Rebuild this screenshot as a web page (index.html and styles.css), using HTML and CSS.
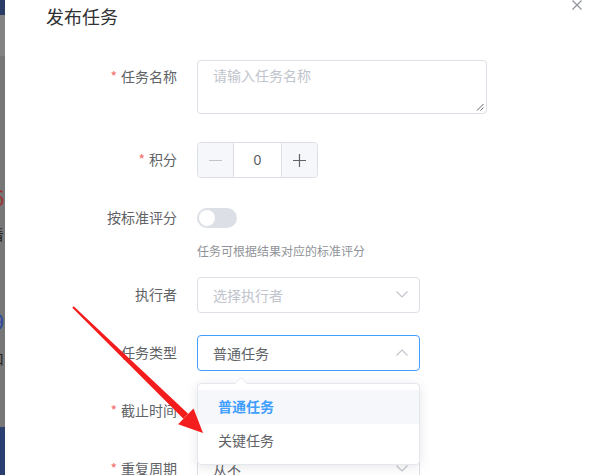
FILE: index.html
```html
<!DOCTYPE html>
<html lang="zh-CN">
<head>
    <meta charset="UTF-8">
    <title>发布任务</title>
    <link rel="stylesheet" href="styles.css">
</head>
<body>

    <div class="backdrop">
        <div class="bd-top"></div>
        <div class="bd-light"></div>
        <div class="bd-main">
            <span class="peek red">6</span>
            <span class="peek dark">看</span>
            <span class="peek blue">9</span>
            <span class="peek dark">口</span>
        </div>
        <div class="bd-bottom"></div>
    </div>

    <div class="dialog">
        <div class="dialog-header">
            <h3 class="dialog-title">发布任务</h3>
            <svg class="close" width="10" height="10" viewBox="0 0 10 10">
                <path d="M0.5 0.5 L9.5 9.5 M9.5 0.5 L0.5 9.5" stroke="#909399" stroke-width="1.2" fill="none"/>
            </svg>
        </div>

        <div class="form">
            <div class="form-item item-name">
                <label class="form-label"><span class="req">*</span>任务名称</label>
                <div class="form-content">
                    <div class="textarea">
                        <span class="placeholder">请输入任务名称</span>
                        <svg class="resize" width="8" height="8" viewBox="0 0 8 8">
                            <path d="M7.5 1 L1 7.5 M7.5 4.5 L4.5 7.5" stroke="#606266" stroke-width="1" fill="none"/>
                        </svg>
                    </div>
                </div>
            </div>

            <div class="form-item">
                <label class="form-label"><span class="req">*</span>积分</label>
                <div class="form-content">
                    <div class="input-number">
                        <span class="num-btn minus">
                            <svg width="13" height="13" viewBox="0 0 13 13"><path d="M0 6.5 H13" stroke="#c0c4cc" stroke-width="1.2"/></svg>
                        </span>
                        <span class="num-value">0</span>
                        <span class="num-btn plus">
                            <svg width="13" height="13" viewBox="0 0 13 13"><path d="M0 6.5 H13 M6.5 0 V13" stroke="#606266" stroke-width="1.2"/></svg>
                        </span>
                    </div>
                </div>
            </div>

            <div class="form-item item-switch">
                <label class="form-label">按标准评分</label>
                <div class="form-content">
                    <div class="switch-line">
                        <span class="switch"><span class="knob"></span></span>
                    </div>
                    <div class="hint">任务可根据结果对应的标准评分</div>
                </div>
            </div>

            <div class="form-item">
                <label class="form-label">执行者</label>
                <div class="form-content">
                    <div class="select">
                        <span class="placeholder">选择执行者</span>
                        <svg class="arrow" width="12" height="7" viewBox="0 0 12 7"><path d="M0.5 0.5 L6 6 L11.5 0.5" stroke="#c0c4cc" stroke-width="1.1" fill="none"/></svg>
                    </div>
                </div>
            </div>

            <div class="form-item">
                <label class="form-label">任务类型</label>
                <div class="form-content">
                    <div class="select focused">
                        <span class="value">普通任务</span>
                        <svg class="arrow" width="12" height="7" viewBox="0 0 12 7"><path d="M0.5 6.5 L6 1 L11.5 6.5" stroke="#c0c4cc" stroke-width="1.1" fill="none"/></svg>
                    </div>
                </div>
            </div>

            <div class="form-item">
                <label class="form-label"><span class="req">*</span>截止时间</label>
                <div class="form-content">
                    <div class="select"></div>
                </div>
            </div>

            <div class="form-item">
                <label class="form-label"><span class="req">*</span>重复周期</label>
                <div class="form-content">
                    <div class="select">
                        <span class="value">从不</span>
                        <svg class="arrow" width="12" height="7" viewBox="0 0 12 7"><path d="M0.5 0.5 L6 6 L11.5 0.5" stroke="#c0c4cc" stroke-width="1.1" fill="none"/></svg>
                    </div>
                </div>
            </div>
        </div>
    </div>

    <!-- dropdown of 任务类型, lies over the form -->
    <div class="dropdown">
        <span class="popper-arrow"></span>
        <ul class="dropdown-list">
            <li class="option selected">普通任务</li>
            <li class="option">关键任务</li>
        </ul>
    </div>

    <!-- red annotation arrow drawn over the screenshot -->
    <svg class="annotation" width="597" height="475" viewBox="0 0 597 475">
        <polygon points="72.3,307.7 73.7,306.3 188.2,413.8 183.4,418.8" fill="#f41d1d"/>
        <polygon points="203,433 178.1,424.2 193.5,408.4" fill="#f41d1d"/>
    </svg>

</body>
</html>
```

FILE: styles.css
```css
* {
    margin: 0;
    padding: 0;
    box-sizing: border-box;
}
body {
    width: 597px;
    height: 475px;
    overflow: hidden;
    display: flex;
    background: #fff;
    font-family: "Noto Sans CJK SC", "Liberation Sans", sans-serif;
    font-size: 14px;
    color: #606266;
}
/* page behind the overlay */
.backdrop {
    width: 5px;
    flex-shrink: 0;
    display: flex;
    flex-direction: column;
    overflow: hidden;
}
.bd-top {
    height: 15px;
    background: #2b3d66;
}
.bd-light {
    height: 41px;
    background: #838383;
}
.bd-main {
    flex: 1;
    background: #777;
    padding-top: 128px;
    display: flex;
    flex-direction: column;
}
.bd-bottom {
    height: 48px;
    background: #2a3e6f;
}
.peek {
    display: block;
    margin-left: -8px;
    font-size: 22px;
    line-height: 24px;
}
.peek.red { color: #9b3333; }
.peek.dark { color: #222; font-size: 14px; margin-top: 14px; margin-left: -10px; }
.peek.blue { color: #2d4aa0; margin-top: 62px; }
.dialog {
    flex: 1;
    background: #fff;
}
.dialog-header {
    display: flex;
    justify-content: space-between;
    align-items: flex-start;
    padding: 0 15px 0 41px;
}
.dialog-title {
    margin-top: 4px;
    font-size: 18px;
    line-height: 24px;
    font-weight: normal;
    color: #303133;
}
.close {
    display: block;
}
.form {
    margin-top: 31px;
    padding-left: 42px;
}
.form-item {
    display: flex;
    margin-bottom: 22px;
}
.item-name {
    margin-bottom: 28px;
}
.item-switch {
    margin-bottom: 16px;
}
.form-label {
    width: 150px;
    flex-shrink: 0;
    padding-right: 20px;
    text-align: right;
    line-height: 35px;
    padding-bottom: 1px;
    color: #606266;
}
.req {
    color: #f56c6c;
    margin-right: 4px;
}
.textarea {
    width: 290px;
    height: 54px;
    margin-top: 1px;
    border: 1px solid #dcdfe6;
    border-radius: 4px;
    padding: 4px 15px;
    line-height: 21px;
    display: flex;
    justify-content: space-between;
    align-items: flex-start;
}
.resize {
    align-self: flex-end;
    margin: 0 -13px -2px 0;
}
.placeholder {
    color: #c0c4cc;
}
.input-number {
    width: 121px;
    height: 36px;
    display: flex;
    border: 1px solid #dcdfe6;
    border-radius: 4px;
    overflow: hidden;
}
.num-btn {
    width: 36px;
    background: #f5f7fa;
    display: flex;
    align-items: center;
    justify-content: center;
}
.minus { border-right: 1px solid #dcdfe6; }
.plus { border-left: 1px solid #dcdfe6; }
.num-value {
    flex: 1;
    text-align: center;
    line-height: 34px;
    font-family: "Liberation Sans", sans-serif;
}
.switch-line {
    height: 36px;
    display: flex;
    align-items: center;
}
.switch {
    width: 40px;
    height: 20px;
    border-radius: 10px;
    background: #dcdfe6;
    display: flex;
    align-items: center;
    padding-left: 2px;
}
.knob {
    width: 16px;
    height: 16px;
    border-radius: 50%;
    background: #fff;
}
.hint {
    margin-top: 5px;
    font-size: 12px;
    line-height: 19px;
    padding-bottom: 1px;
    color: #909399;
}
.select {
    width: 223px;
    height: 36px;
    border: 1px solid #dcdfe6;
    border-radius: 4px;
    padding: 0 10px 1px 15px;
    display: flex;
    align-items: center;
    justify-content: space-between;
}
.select.focused {
    border-color: #409eff;
}
.select .arrow {
    margin-right: 1px;
}
.dropdown {
    position: absolute;
    left: 197px;
    top: 383px;
    width: 223px;
    background: #fff;
    border: 1px solid #e4e7ed;
    border-radius: 4px;
    box-shadow: 0 2px 12px rgba(0, 0, 0, 0.1);
}
.popper-arrow {
    position: absolute;
    left: 37px;
    top: -7px;
    width: 0;
    height: 0;
    border: 6px solid transparent;
    border-top-width: 0;
    border-bottom-color: #e4e7ed;
}
.popper-arrow::after {
    content: "";
    position: absolute;
    left: -6px;
    top: 1px;
    border: 6px solid transparent;
    border-top-width: 0;
    border-bottom-color: #fff;
}
.dropdown-list {
    list-style: none;
    padding: 6px 0;
}
.option {
    height: 34px;
    line-height: 32px;
    padding: 0 20px 2px;
    color: #606266;
}
.option.selected {
    background: #f5f7fa;
    color: #409eff;
    font-weight: bold;
}
.annotation {
    position: absolute;
    left: 0;
    top: 0;
    pointer-events: none;
}
```
